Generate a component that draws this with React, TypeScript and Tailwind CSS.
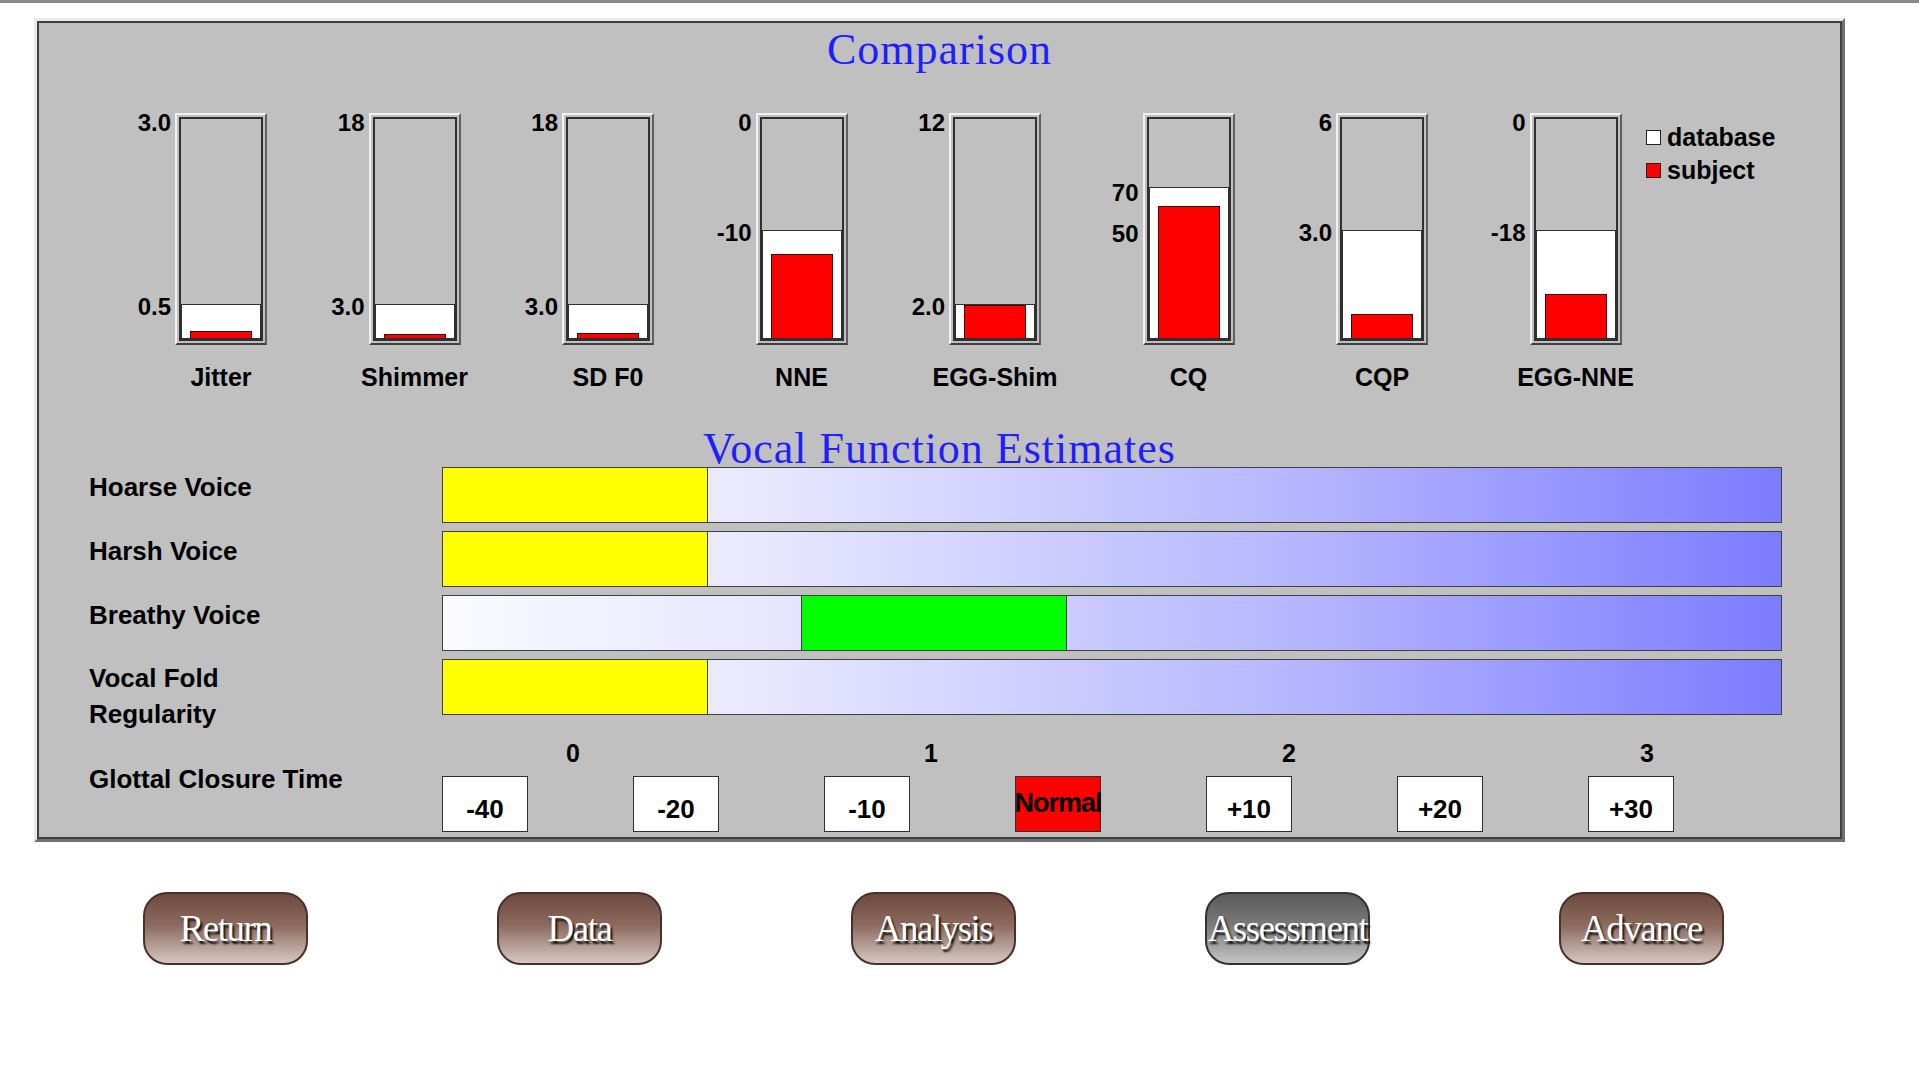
import React from "react";

const narrow = { fontFamily: '"Liberation Sans Narrow","Arial Narrow","Liberation Sans",Arial,sans-serif' };

type Bar = { name: string; top?: string; mid?: string; midTop?: string; white: number; red: number };
const bars: Bar[] = [
  { name: "Jitter", top: "3.0", mid: "0.5", white: 35, red: 7 },
  { name: "Shimmer", top: "18", mid: "3.0", white: 35, red: 4 },
  { name: "SD F0", top: "18", mid: "3.0", white: 35, red: 5 },
  { name: "NNE", top: "0", mid: "-10", white: 109, red: 84 },
  { name: "EGG-Shim", top: "12", mid: "2.0", white: 35, red: 34 },
  { name: "CQ", midTop: "70", mid: "50", white: 152, red: 132 },
  { name: "CQP", top: "6", mid: "3.0", white: 109, red: 24 },
  { name: "EGG-NNE", top: "0", mid: "-18", white: 109, red: 44 },
];

function Column({ b }: { b: Bar }) {
  const midY = 6 + 220 - (b.name === "CQ" ? 108 : b.white) - 15;
  return (
    <div className="w-[193.5px] shrink-0 flex flex-col">
      <div className="flex">
        <div className="relative w-[60px] text-[24px] font-bold text-black text-right pr-[4px]" style={narrow}>
          {b.top && <div className="absolute right-[4px] top-[-8px]">{b.top}</div>}
          {b.midTop && <div className="absolute right-[4px]" style={{ top: 6 + 220 - b.white - 12 }}>{b.midTop}</div>}
          <div className="absolute right-[4px]" style={{ top: midY }}>{b.mid}</div>
        </div>
        <div className="w-[92px] h-[232px] border-2 border-[#f2f2f2] border-b-[#404040] border-r-[#606060] p-[2px]">
          <div className="w-full h-full border-2 border-[#303030] bg-[#c0c0c0] flex flex-col justify-end">
            <div className="bg-white border border-[#303030] flex flex-col justify-end px-[8px]" style={{ height: b.white }}>
              <div className="bg-[#ff0000] border border-[#400000] border-b-0" style={{ height: b.red }} />
            </div>
          </div>
        </div>
      </div>
      <div className="mt-[14px] ml-[60px] w-[92px] text-center text-[25px] font-bold text-black whitespace-nowrap flex justify-center" style={narrow}>
        {b.name}
      </div>
    </div>
  );
}

function GradRow({ children }: { children?: React.ReactNode }) {
  return (
    <div className="h-[56px] w-[1340px] border border-[#404040] bg-[linear-gradient(to_right,#fafaff,#e6e6ff_25%,#b4b4ff_65%,#7c7cff)] relative flex">
      {children}
    </div>
  );
}

function Btn({ label, gray }: { label: string; gray?: boolean }) {
  return (
    <div
      className={`w-[165px] h-[73px] rounded-[24px] border-2 flex items-center justify-center text-white text-[37px] tracking-[-1.5px] [text-shadow:2px_3px_2px_#111] ${
        gray
          ? "border-[#333] bg-[linear-gradient(to_bottom,#5a5a5a,#7a7a7a_45%,#c4c4c4)] text-[#bbb]"
          : "border-[#4a3028] bg-[linear-gradient(to_bottom,#6e4a3e,#8c6a5e_45%,#d6c8c2)]"
      }`}
      style={{ fontFamily: '"Liberation Serif","Times New Roman",serif' }}
    >
      {label}
    </div>
  );
}

export default function App() {
  const rows = ["Hoarse Voice", "Harsh Voice", "Breathy Voice"];
  const boxes = ["-40", "-20", "-10", "Normal", "+10", "+20", "+30"];
  return (
    <div className="w-[1919px] h-[1073px] bg-white border-t-[3px] border-[#8a8a8a] relative overflow-hidden" style={narrow}>
      <div className="ml-[34px] mt-[15px] w-[1811px] h-[824px] border-[3px] border-[#ececec] border-r-[#707070] border-b-[#707070]">
        <div className="w-full h-full border-2 border-[#404040] bg-[#c0c0c0] flex flex-col">
          <div className="text-center text-[44px] leading-[50px] text-[#1e1eff] mt-[2px] tracking-[1px]" style={{ fontFamily: '"Liberation Serif","Times New Roman",serif' }}>
            Comparison
          </div>
          <div className="flex ml-[76px] mt-[38px]">
            {bars.map((b) => (
              <Column key={b.name} b={b} />
            ))}
            <div className="-ml-[17px] mt-[8px] text-[25px] font-bold leading-[33px]" style={narrow}>
              <div className="flex items-center gap-[6px]"><span className="w-[15px] h-[15px] bg-white border border-[#222]" />database</div>
              <div className="flex items-center gap-[6px]"><span className="w-[15px] h-[15px] bg-[#ff0000] border border-[#222]" />subject</div>
            </div>
          </div>
          <div className="text-center text-[44px] leading-[50px] text-[#1e1eff] mt-[27px] tracking-[1px]" style={{ fontFamily: '"Liberation Serif","Times New Roman",serif' }}>
            Vocal Function Estimates
          </div>
          <div className="flex flex-col gap-[8px] mt-[-7px]">
            {rows.map((r, i) => (
              <div key={r} className="flex">
                <div className="w-[403px] pl-[50px] pt-[4px] text-[26px] font-bold leading-[32px]" style={narrow}>{r}</div>
                <GradRow>
                  {i < 2 ? (
                    <div className="w-[265px] h-full bg-[#ffff00] border-r border-[#404040]" />
                  ) : (
                    <>
                      <div className="w-[358px]" />
                      <div className="w-[266px] h-full bg-[#00ff00] border-x border-[#404040]" />
                    </>
                  )}
                </GradRow>
              </div>
            ))}
            <div className="flex">
              <div className="w-[403px] pl-[50px] pt-[1px] text-[26px] font-bold leading-[36px]" style={narrow}>Vocal Fold<br />Regularity</div>
              <GradRow>
                <div className="w-[265px] h-full bg-[#ffff00] border-r border-[#404040]" />
              </GradRow>
            </div>
          </div>
          <div className="flex mt-[6px]">
            <div className="w-[403px] pl-[50px] pt-[22px] text-[26px] font-bold" style={narrow}>Glottal Closure Time</div>
            <div className="flex flex-col">
              <div className="flex text-[25px] font-bold leading-[30px] h-[32px]" style={narrow}>
                {["0", "1", "2", "3"].map((n, i) => (
                  <div key={n} className={`w-[24px] text-center ${i === 0 ? "ml-[119px]" : "ml-[334px]"}`}>{n}</div>
                ))}
              </div>
              <div className="flex gap-[105px] mt-[6px]">
                {boxes.map((b) => (
                  <div
                    key={b}
                    className={`w-[86px] h-[56px] border border-[#303030] flex justify-center ${
                      b === "Normal" ? "bg-[#ff0000] items-center text-[27px] tracking-[-1px]" : "bg-white items-end pb-[2px] text-[26px]"
                    } font-bold text-black`}
                    style={narrow}
                  >
                    {b}
                  </div>
                ))}
              </div>
            </div>
          </div>
        </div>
      </div>
      <div className="flex ml-[143px] mt-[50px] gap-[189px]">
        <Btn label="Return" />
        <Btn label="Data" />
        <Btn label="Analysis" />
        <Btn label="Assessment" gray />
        <Btn label="Advance" />
      </div>
    </div>
  );
}
